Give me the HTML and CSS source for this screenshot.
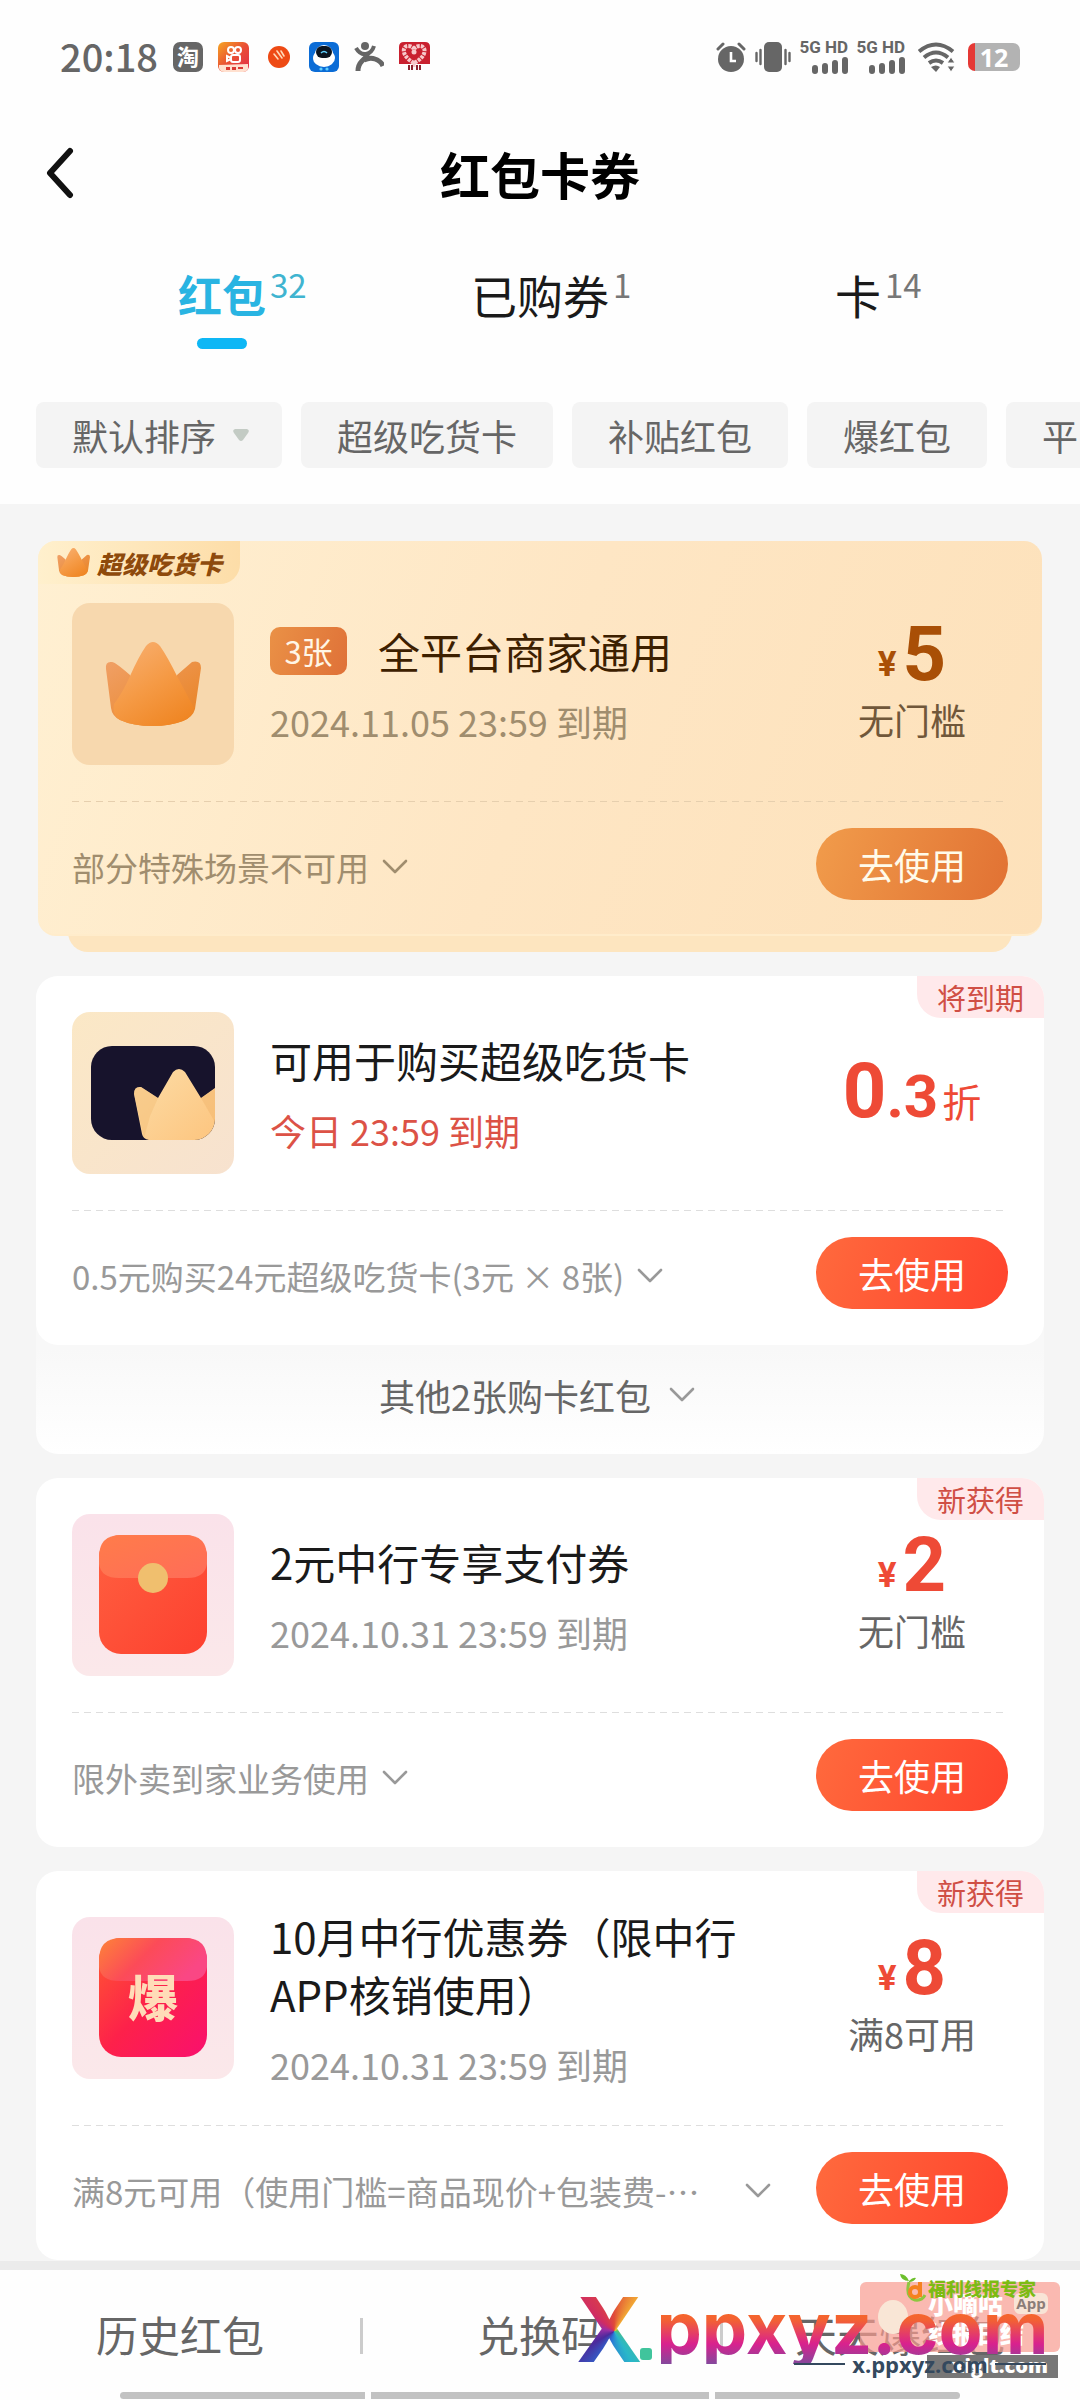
FILE: index.html
```html
<!DOCTYPE html>
<html lang="zh-CN">
<head>
<meta charset="utf-8">
<meta name="viewport" content="width=device-width, initial-scale=1">
<title>红包卡券</title>
<link rel="stylesheet" href="styles.css">
</head>
<body>
<svg class="defs" aria-hidden="true">
  <defs>
    <linearGradient id="crownBody" x1="0.2" y1="0" x2="0.8" y2="1"><stop offset="0" stop-color="#f8ae6e"/><stop offset="0.5" stop-color="#f59a45"/><stop offset="1" stop-color="#ef8522"/></linearGradient>
    <linearGradient id="crownEar" x1="0" y1="0" x2="1" y2="1"><stop offset="0" stop-color="#f0a066"/><stop offset="1" stop-color="#e8811f"/></linearGradient>
    <linearGradient id="gold" x1="0" y1="0" x2="1" y2="1"><stop offset="0" stop-color="#fcdca6"/><stop offset="1" stop-color="#fdc57f"/></linearGradient>
    <linearGradient id="envelope" x1="0" y1="0" x2="1" y2="1"><stop offset="0" stop-color="#ff6040"/><stop offset="1" stop-color="#fd402f"/></linearGradient>
    <linearGradient id="flap" x1="0" y1="0" x2="1" y2="1"><stop offset="0" stop-color="#ff7c4a"/><stop offset="1" stop-color="#ff6c58"/></linearGradient>
    <linearGradient id="burst" x1="0" y1="0" x2="1" y2="1"><stop offset="0" stop-color="#ff5a30"/><stop offset="0.5" stop-color="#fd214a"/><stop offset="1" stop-color="#f9106e"/></linearGradient>
    <linearGradient id="burstFlap" x1="0" y1="0" x2="1" y2="0.4"><stop offset="0" stop-color="#fd8438"/><stop offset="0.5" stop-color="#fc4b58"/><stop offset="1" stop-color="#fa4784"/></linearGradient>
    <linearGradient id="kuai" x1="0" y1="0" x2="1" y2="1"><stop offset="0" stop-color="#f6a623"/><stop offset="0.5" stop-color="#e94f35"/><stop offset="1" stop-color="#e22d4b"/></linearGradient>
    <symbol id="crown" viewBox="0 0 96 84">
      <path d="M1 27Q0 19 7 20Q10 20 25 33L30 60L68 60L72 33L87 20Q96 18 96 26L90 67Q88 75 78 79Q65 84 48 84Q28 84 15 78Q7 74 6 66Z" fill="url(#crownEar)"/>
      <path d="M41 4Q48-4 55 4Q62 14 72 34L89 66Q88 75 78 79Q65 84 48 84Q28 84 15 78Q7 74 9 62Q18 50 25 34Q34 14 41 4Z" fill="url(#crownBody)"/>
    </symbol>
    <symbol id="chev" viewBox="0 0 26 16"><path d="M2 2L13 13L24 2" fill="none" stroke="currentColor" stroke-width="2.6" stroke-linecap="round" stroke-linejoin="round"/></symbol>
    <symbol id="signal" viewBox="0 0 36 17"><path d="M3 11v3M13 9v5M23 6v8M33 3v11" stroke="#666" stroke-width="6" stroke-linecap="round"/></symbol>
  </defs>
</svg>

<header class="top">
  <div class="status">
    <div class="status-group">
      <span class="clock">20:18</span>
      <svg width="30" height="30" viewBox="0 0 30 30"><rect width="30" height="30" rx="7" fill="#666"/><text x="15" y="23" text-anchor="middle" class="tao">淘</text></svg>
      <svg width="31" height="30" viewBox="0 0 31 30"><rect width="31" height="30" rx="6" fill="url(#kuai)"/><g fill="none" stroke="#fff" stroke-width="2"><circle cx="13" cy="8" r="3"/><circle cx="20" cy="8" r="3"/><rect x="13" y="13" width="9" height="7" rx="2"/><path d="M13 16l-4-2v5l4-2"/></g><path d="M1 23l29-1v5q-1 3-5 3H6q-4 0-5-4z" fill="#ffe0cf"/><path d="M8 25h4v3H8zM14 25h4v3h-4zM20 25h5v2h-5z" fill="#d93a34"/></svg>
      <svg class="ball" width="22" height="22" viewBox="0 0 22 22"><circle cx="11" cy="11" r="11" fill="#ee4a14"/><path d="M6 8l4 5M9 5l5 7M13 5l3 5" stroke="#ffd9b8" stroke-width="1.600" stroke-linecap="round"/></svg>
      <svg width="30" height="30" viewBox="0 0 30 30"><rect width="30" height="30" rx="6" fill="#0b6cd6"/><ellipse cx="15" cy="16" rx="11" ry="9" fill="#fff"/><path d="M6 12a9 9 0 0 1 18 0z" fill="#fff"/><rect x="7" y="4" width="16" height="12" rx="6" fill="#0a1420"/><path d="M12 11q3-3 6 0" stroke="#5fd0ff" stroke-width="1.5" fill="none"/><circle cx="12" cy="27" r="1.6" fill="#5fd0ff"/><circle cx="18" cy="27" r="1.6" fill="#5fd0ff"/></svg>
      <svg width="30" height="30" viewBox="0 0 30 30"><circle cx="11" cy="4" r="4" fill="#666"/><path d="M2 6q4 7 10 6q6-1 8-8" fill="none" stroke="#666" stroke-width="4"/><path d="M14 11q-2 5-6 8q-4 4-4 10M10 18q6-3 11-1q6 2 8 7" fill="none" stroke="#666" stroke-width="5"/></svg>
      <svg width="31" height="30" viewBox="0 0 31 30"><path d="M5 0h21q5 0 5 5v17H0V5q0-5 5-5z" fill="#c9202f"/><path d="M15 21C2 14 3 4 9 4q5 0 6 4q1-4 6-4c6 0 8 10-6 17z" fill="none" stroke="#f7c9cb" stroke-width="4" stroke-dasharray="3 1"/><circle cx="15" cy="10" r="2.5" fill="#f7c9cb"/><path d="M15 20v5" stroke="#f7c9cb" stroke-width="3"/><path d="M10 23v5M13 23v5M18 23v5M21 23v5" stroke="#8d2430" stroke-width="2"/></svg>
    </div>
    <div class="status-group status-right">
      <svg width="30" height="30" viewBox="0 0 30 30"><circle cx="15" cy="17" r="13" fill="#666"/><path d="M2 7l5-5M28 7l-5-5" stroke="#666" stroke-width="3" stroke-linecap="round"/><path d="M15 10v9h5" fill="none" stroke="#fff" stroke-width="2.6"/></svg>
      <svg width="36" height="30" viewBox="0 0 36 30"><rect x="9" width="18" height="30" rx="5" fill="#666"/><path d="M1.500 11v8M5.500 8v14M30.500 8v14M34.500 11v8" stroke="#666" stroke-width="2.400" stroke-linecap="round"/></svg>
      <div class="net"><span>5G HD</span><svg width="36" height="17"><use href="#signal"/></svg></div>
      <div class="net"><span>5G HD</span><svg width="36" height="17"><use href="#signal"/></svg></div>
      <svg class="wifi" width="38" height="30" viewBox="0 0 38 30"><g fill="none" stroke="#666" stroke-width="4"><path d="M1 9.500q17-14 34 0"/><path d="M6 15.500q12-10 24 0"/><path d="M11 21q7-5 14 0"/></g><path d="M13 25q5-3 9 0l-4 5z" fill="#666"/><path d="M33 15l4 6h-8zM33 30l4-6h-8z" fill="#666" stroke="#fff" stroke-width="1"/></svg>
      <div class="battery"><span>12</span></div>
    </div>
  </div>

  <div class="titlebar">
    <button class="back" aria-label="返回"><svg width="28" height="52" viewBox="0 0 28 52"><path d="M24 4L4 26L24 48" fill="none" stroke="#111" stroke-width="6" stroke-linecap="round" stroke-linejoin="round"/></svg></button>
    <h1>红包卡券</h1>
  </div>

  <div class="tabs" role="tablist">
    <button class="tab active" role="tab" aria-selected="true"><span class="tab-label">红包<sup>32</sup></span></button>
    <button class="tab" role="tab"><span class="tab-label">已购券<sup>1</sup></span></button>
    <button class="tab" role="tab"><span class="tab-label">卡<sup>14</sup></span></button>
  </div>

  <div class="chips">
    <button class="chip">默认排序<svg width="18" height="14" viewBox="0 0 18 14"><path d="M3 1h12q3 1 1 4l-5 7q-2 2-4 0L2 5q-2-3 1-4z" fill="#c3cbc4"/></svg></button>
    <button class="chip">超级吃货卡</button>
    <button class="chip">补贴红包</button>
    <button class="chip">爆红包</button>
    <button class="chip">平</button>
  </div>
</header>

<main class="list">
  <div class="stack">
    <article class="card gold">
      <div class="brand"><svg width="33" height="29"><use href="#crown"/></svg><span>超级吃货卡</span></div>
      <div class="body">
        <div class="thumb"><svg width="96" height="84"><use href="#crown"/></svg></div>
        <div class="info">
          <h2><span class="count">3张</span>全平台商家通用</h2>
          <p class="date">2024.11.05 23:59 到期</p>
        </div>
        <div class="value"><p class="price"><small>¥</small>5</p><p class="limit">无门槛</p></div>
      </div>
      <div class="foot">
        <button class="rule"><span>部分特殊场景不可用</span><svg width="26" height="16"><use href="#chev"/></svg></button>
        <button class="use">去使用</button>
      </div>
    </article>
  </div>

  <div class="group">
    <article class="card">
      <span class="tag">将到期</span>
      <div class="body">
        <div class="thumb cream">
          <svg width="162" height="162" viewBox="0 0 162 162">
            <clipPath id="ticket"><rect x="19" y="34" width="124" height="94" rx="21"/></clipPath>
            <g clip-path="url(#ticket)"><rect x="19" y="34" width="124" height="94" fill="#17132c"/>
            <path d="M62 82Q62 74 69 75L86 86L101 60Q107 54 113 60L129 86L143 76V128H77Q71 127 70 122Z" fill="url(#gold)"/>
            <path d="M62 82Q62 74 69 75L86 86L78 104L72 126Z" fill="#f3c07a" opacity="0.5"/><path d="M129 86L144 76V112Z" fill="#f0b46a" opacity="0.45"/></g>
          </svg>
        </div>
        <div class="info">
          <h2>可用于购买超级吃货卡</h2>
          <p class="date soon">今日 23:59 到期</p>
        </div>
        <div class="value"><p class="price">0<span class="decimal">.3</span><span class="unit">折</span></p></div>
      </div>
      <div class="foot">
        <button class="rule"><span>0.5元购买24元超级吃货卡(3元 × 8张)</span><svg width="26" height="16"><use href="#chev"/></svg></button>
        <button class="use">去使用</button>
      </div>
    </article>
    <button class="more">其他2张购卡红包<svg width="26" height="16"><use href="#chev"/></svg></button>
  </div>

  <article class="card">
    <span class="tag">新获得</span>
    <div class="body">
      <div class="thumb pink">
        <svg width="162" height="162" viewBox="0 0 162 162">
          <rect x="27" y="21" width="108" height="119" rx="22" fill="url(#envelope)"/>
          <path d="M49 21H113Q135 21 135 43V50Q133 64 115 64H47Q29 64 27 50V43Q27 21 49 21Z" fill="url(#flap)"/>
          <circle cx="81" cy="64" r="15" fill="#f0bf6e"/>
        </svg>
      </div>
      <div class="info">
        <h2>2元中行专享支付券</h2>
        <p class="date">2024.10.31 23:59 到期</p>
      </div>
      <div class="value"><p class="price"><small>¥</small>2</p><p class="limit">无门槛</p></div>
    </div>
    <div class="foot">
      <button class="rule"><span>限外卖到家业务使用</span><svg width="26" height="16"><use href="#chev"/></svg></button>
      <button class="use">去使用</button>
    </div>
  </article>

  <article class="card">
    <span class="tag">新获得</span>
    <div class="body">
      <div class="thumb pink">
        <svg width="162" height="162" viewBox="0 0 162 162">
          <rect x="27" y="21" width="108" height="119" rx="22" fill="url(#burst)"/>
          <path d="M49 21H113Q135 21 135 43V50Q133 64 115 64H47Q29 64 27 50V43Q27 21 49 21Z" fill="url(#burstFlap)"/>
          <text x="81" y="100" text-anchor="middle" class="bao">爆</text>
        </svg>
      </div>
      <div class="info">
        <h2>10月中行优惠券（限中行APP核销使用）</h2>
        <p class="date">2024.10.31 23:59 到期</p>
      </div>
      <div class="value"><p class="price"><small>¥</small>8</p><p class="limit">满8可用</p></div>
    </div>
    <div class="foot">
      <button class="rule wide"><span>满8元可用（使用门槛=商品现价+包装费-…</span><svg width="26" height="16"><use href="#chev"/></svg></button>
      <button class="use">去使用</button>
    </div>
  </article>
</main>

<nav class="bottom">
  <a href="#history">历史红包</a>
  <a href="#redeem">兑换码</a>
  <a href="#daily">天天爆红包</a>
  <div class="home"><i></i><i></i><i></i></div>
  <div class="mark" aria-hidden="true">
    <div class="promo"><i class="face"></i><span class="promo-name">小嘀咕</span><span class="promo-app">App</span><span class="promo-sub">线报日结</span></div>
    <div class="expert"><svg width="28" height="30" viewBox="0 0 28 30"><path d="M9 8Q6 1 0 1Q1 8 9 8Q13 4 16 5Q14 9 9 9" fill="#6cbf2c"/><path d="M9 9Q5 24 15 27Q22 28 25 22" fill="none" stroke="#8dc63f" stroke-width="3"/><circle cx="15" cy="19" r="5" fill="none" stroke="#f58220" stroke-width="4"/><path d="M20 9v15" stroke="#f58220" stroke-width="4"/></svg><span>福利线报专家</span></div>
    <div class="dark">xiglt.com</div>
    <div class="big"><span class="big-x">X</span><i></i><span class="big-rest">ppxyz.com</span></div>
    <div class="small"><hr><span>x.ppxyz.com</span><hr></div>
  </div>
</nav>
</body>
</html>
```
FILE: styles.css
```css
* { box-sizing: border-box; }
body, h1, h2, p { margin: 0; }
body {
  background: #f5f5f5;
  color: #1a1a1a;
  font-family: "Noto Sans CJK SC", "Noto Sans", sans-serif;
  overflow-x: hidden;
}
button { font: inherit; color: inherit; background: none; border: 0; padding: 0; cursor: pointer; }
svg { display: block; flex: none; }
.defs { position: absolute; width: 0; height: 0; }

/* Header */
.top { background: #fefefe; padding-bottom: 36px; }
.status { display: flex; justify-content: space-between; align-items: center; height: 114px; padding: 0 60px; }
.status-group { display: flex; align-items: center; gap: 15px; }
.status-right { gap: 9px; }
.clock { padding-bottom: 3px; font-size: 38px; font-weight: 500; line-height: 56px; color: #666; }
.ball { margin: 0 4px; }
.tao { font-size: 22px; font-weight: 700; fill: #fff; }
.net { display: flex; flex-direction: column; align-items: flex-end; gap: 3px; width: 48px; }
.net span { font: 700 17px/14px Roboto, sans-serif; color: #666; white-space: nowrap; }
.wifi { margin-left: 4px; }
.battery {
  width: 52px; height: 28px; margin-left: 3px; border-radius: 7px; color: #fff;
  background: linear-gradient(90deg, #e53935 7px, #b3b3b3 7px);
  font: 700 25px/28px "Open Sans", sans-serif; text-align: center;
}
.titlebar { position: relative; display: flex; align-items: center; justify-content: center; height: 122px; padding-bottom: 4px; }
.titlebar h1 { font-size: 50px; line-height: 76px; font-weight: 700; color: #000; }
.back { position: absolute; left: 46px; }

.tabs { display: flex; padding: 32px 63px 0; }
.tab { flex: 1; display: flex; flex-direction: column; align-items: center; gap: 18px; }
.tab-label { position: relative; font-size: 46px; line-height: 52px; }
.tab.active .tab-label { font-size: 44px; }
.tab sup { position: absolute; left: 100%; top: -8px; margin-left: 4px; font-size: 33px; line-height: 48px; font-weight: 400; color: #777; }
.tab::after { content: ""; width: 50px; height: 11px; border-radius: 6px; }
.tab.active { color: #29b4e2; font-weight: 700; }
.tab.active sup { color: #40b4d0; }
.tab.active::after { background: #0eb7f5; }

.chips { display: flex; gap: 19px; margin-top: 53px; padding-left: 36px; overflow: hidden; }
.chip {
  flex: none; display: flex; align-items: center; gap: 16px; height: 66px; padding: 0 36px;
  background: #f4f4f4; border-radius: 8px; font-size: 36px; color: #666; white-space: nowrap;
}
.chip:first-child { padding-right: 32px; }

/* Coupon list */
.list { display: flex; flex-direction: column; gap: 24px; padding: 37px 36px 10px; }
.card { position: relative; padding: 36px; background: #fff; border-radius: 22px; }
.body { display: flex; align-items: center; gap: 36px; padding-bottom: 36px; }
.thumb {
  flex: none; display: flex; align-items: center; justify-content: center;
  width: 162px; height: 162px; border-radius: 18px; background: #f7d8ae;
}
.thumb.cream { background: linear-gradient(135deg, #fbe8c6, #f7e2cf); }
.thumb.pink { background: linear-gradient(180deg, #fae2ea, #fbe8ea); }
.bao { font-size: 50px; font-weight: 900; fill: #ffdcb8; }
.info { flex: 1; display: flex; flex-direction: column; gap: 19px; padding-bottom: 3px; }
.info h2 { font-size: 42px; line-height: 58px; font-weight: 400; }
.date { font-size: 36px; line-height: 44px; color: #999; }
.date.soon { color: #dc5246; }
.value { width: 192px; text-align: center; color: #ee4a36; }
.price { font: 700 76px/62px "Liberation Sans Narrow", Roboto, sans-serif; }
.price small { margin-right: 6px; font-size: 35px; line-height: 1; vertical-align: 4px; }
.decimal { font-size: 60px; line-height: 1; }
.unit { margin-left: 4px; font: 400 39px/40px "Noto Sans CJK SC", sans-serif; }
.limit { margin-top: 7px; font-size: 36px; line-height: 54px; color: #666; }
.foot {
  display: flex; align-items: center; justify-content: space-between; gap: 45px; padding-top: 27px;
  background: repeating-linear-gradient(90deg, #dedede 0 7px, transparent 7px 12px) 0 0 / 100% 1px no-repeat;
}
.rule { display: flex; align-items: center; gap: 13px; min-width: 0; padding-top: 5px; color: #999; font-size: 33px; line-height: 50px; }
.rule span { overflow: hidden; white-space: nowrap; }
.rule.wide { flex: 1; text-align: left; }
.rule.wide span { flex: 1; }
.use {
  flex: none; width: 192px; height: 72px; border-radius: 36px; color: #fff; font-size: 36px;
  background: linear-gradient(110deg, #ff6a3d, #ff432d);
}
.tag {
  position: absolute; top: 0; right: 0; width: 127px; height: 42px;
  border-radius: 0 22px 0 24px; background: #ffe9eb; color: #d04f45;
  font-size: 29px; line-height: 42px; text-align: center;
}
.group { border-radius: 22px; background: linear-gradient(#f8f8f8 78%, #fff); }
.more {
  display: flex; align-items: center; justify-content: center; gap: 18px;
  width: 100%; height: 109px; padding: 0 6px 10px 0; color: #666; font-size: 36px;
}
.more svg { color: #999; }

.stack { padding: 0 2px 16px; position: relative; }
.stack::before {
  content: ""; position: absolute; left: 32px; right: 32px; bottom: 0; height: 40px;
  border-radius: 0 0 20px 20px; background: #fde5bf;
}
.gold {
  padding: 0 34px 34px; border-radius: 18px;
  background: linear-gradient(110deg, #fff0d2, #fee6c4 50%, #fde1ba);
  border-bottom: 2px solid #ffeccb; color: #3d2000;
}
.gold > .foot { background-image: repeating-linear-gradient(90deg, #e6cfae 0 7px, transparent 7px 12px); }
.brand {
  display: flex; align-items: center; gap: 7px; width: 202px; height: 43px; margin: 0 0 19px -34px;
  padding-left: 19px; border-radius: 18px 0 20px 0; background: linear-gradient(90deg, #fff0cd, #fddda8);
  color: #8e4a0c; font-size: 25px; font-weight: 900; font-style: italic; white-space: nowrap;
}
.gold h2 { display: flex; align-items: center; gap: 31px; }
.count {
  width: 77px; height: 48px; border-radius: 10px; background: linear-gradient(110deg, #ea9146, #df7138);
  color: #fff6e6; font-size: 31px; line-height: 48px; text-align: center;
}
.gold .date, .gold .rule { color: #a08d6e; }
.gold .price { color: #a94f06; }
.gold .limit { color: #70573a; }
.gold .use { background: linear-gradient(110deg, #f19c4b, #e17133); color: #fffbea; }

/* Bottom bar */
.bottom {
  position: sticky; bottom: 0; display: flex; height: 132px; background: #fefefe;
  box-shadow: 0 -9px 0 #ebebeb;
}
.bottom a {
  flex: 1; display: flex; align-items: center; justify-content: center; padding-bottom: 5px;
  font-size: 42px; color: #666; text-decoration: none; white-space: nowrap;
}
.bottom a + a { background: linear-gradient(#ccc, #ccc) 0 50% / 3px 36px no-repeat; }
.home { position: absolute; left: 120px; right: 120px; bottom: 3px; height: 7px; display: flex; gap: 6px; }
.home i { flex: 245; background: #c2c2c2; }
.home i:nth-child(2) { flex: 338; }
.home i:first-child { border-radius: 4px 0 0 4px; }
.home i:last-child { border-radius: 0 4px 4px 0; }

/* Watermark laid over the bar */
.mark { position: absolute; right: 0; top: 0; width: 520px; height: 132px; pointer-events: none; }
.mark > div { position: absolute; }
.promo { left: 300px; top: 12px; width: 200px; height: 70px; border-radius: 6px; background: rgba(248, 155, 144, 0.7); color: #fff; font-weight: 900; overflow: hidden; }
.promo > * { position: absolute; }
.face { left: 18px; top: 18px; width: 30px; height: 34px; border-radius: 50%; background: #f9e6d6; }
.promo-name { left: 68px; top: 8px; font-size: 25px; line-height: 26px; }
.promo-app { left: 154px; top: 11px; width: 34px; border-radius: 6px; background: #f8e4d6; color: #8b7d78; font: 700 15px/21px "Open Sans", sans-serif; text-align: center; }
.promo-sub { left: 68px; top: 38px; font-size: 24px; line-height: 26px; }
.expert { left: 340px; top: 3px; display: flex; align-items: center; color: #7dbb14; font-size: 18px; font-weight: 900; white-space: nowrap; }
.dark { left: 367px; top: 85px; width: 131px; height: 23px; padding-right: 10px; background: #777; color: #fff; text-align: right; font: 800 20px/22px "Open Sans", sans-serif; }
.big { left: 16px; top: 26px; height: 68px; display: flex; align-items: flex-end; font: 700 90px/68px Inter, sans-serif; }
.big-x {
  background: conic-gradient(from 0deg at 58% 52%, #e04b38, #f6c233 45deg, #59c36a 80deg, #29b7c9 150deg, #2a6fd6 200deg, #4b2a9c 240deg, #9b2fa6 280deg, #d02c62 310deg, #e04b38);
  -webkit-background-clip: text; background-clip: text; color: transparent;
}
.big i { width: 12px; height: 12px; margin: 0 4px 4px -2px; border-radius: 3px; background: #40c49c; }
.big-rest {
  height: 72px; font-size: 72px; line-height: 72px;
  background: linear-gradient(#f96a24 24%, #f26035 40%, #d9218e 72%, #84489c 100%);
  -webkit-background-clip: text; background-clip: text; color: transparent;
}
.small { left: 234px; top: 81px; width: 252px; display: flex; align-items: center; gap: 7px; color: #34495e; font: 700 22px/26px "Open Sans", sans-serif; }
.small hr { flex: 1; height: 2px; margin: 0; border: 0; background: #34495e; }
```
